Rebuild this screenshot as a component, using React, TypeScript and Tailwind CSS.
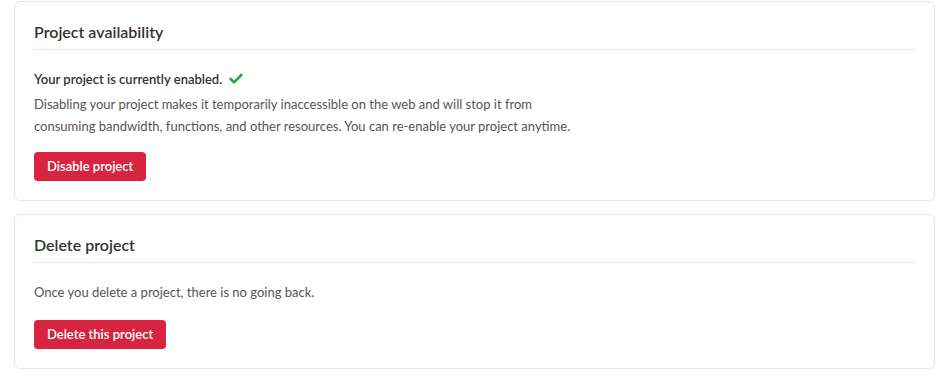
import { Check } from 'lucide-react'

function Card({ title, children }: { title: string; children: React.ReactNode }) {
  return (
    <div className="rounded-md border border-[#e6e6e6] bg-white px-[19px] pt-[18px] pb-[19px]">
      <h3 className="border-b border-[#e8e8e8] pb-[5px] text-[16px] leading-6 font-semibold text-[#333]">
        {title}
      </h3>
      <div className="pt-[19px]">{children}</div>
    </div>
  )
}

export default function App() {
  return (
    <div className="min-h-[384px] bg-white pt-px pr-[9px] pl-[14px]" style={{ fontFamily: 'Lato, "Noto Sans", sans-serif' }}>
      <div className="flex flex-col gap-[13px]">
        <Card title="Project availability">
          <p className="flex items-center gap-1.5 text-[13px] leading-5 font-semibold text-[#333]">
            Your project is currently enabled.
            <Check className="h-4 w-4 text-[#28a745]" strokeWidth={4} />
          </p>
          <p className="mt-1 text-[13px] leading-[22px] text-[#555]">
            Disabling your project makes it temporarily inaccessible on the web and will stop it from
            <br />
            consuming bandwidth, functions, and other resources. You can re-enable your project anytime.
          </p>
          <button className="mt-[15px] h-[29px] rounded-[4px] bg-[#d9243f] px-[13px] text-[13px] font-semibold text-white">
            Disable project
          </button>
        </Card>
        <Card title="Delete project">
          <p className="text-[13px] leading-5 text-[#555]">Once you delete a project, there is no going back.</p>
          <button className="mt-[18px] h-[29px] rounded-[4px] bg-[#d9243f] px-[13px] text-[13px] font-semibold text-white">
            Delete this project
          </button>
        </Card>
      </div>
    </div>
  )
}
